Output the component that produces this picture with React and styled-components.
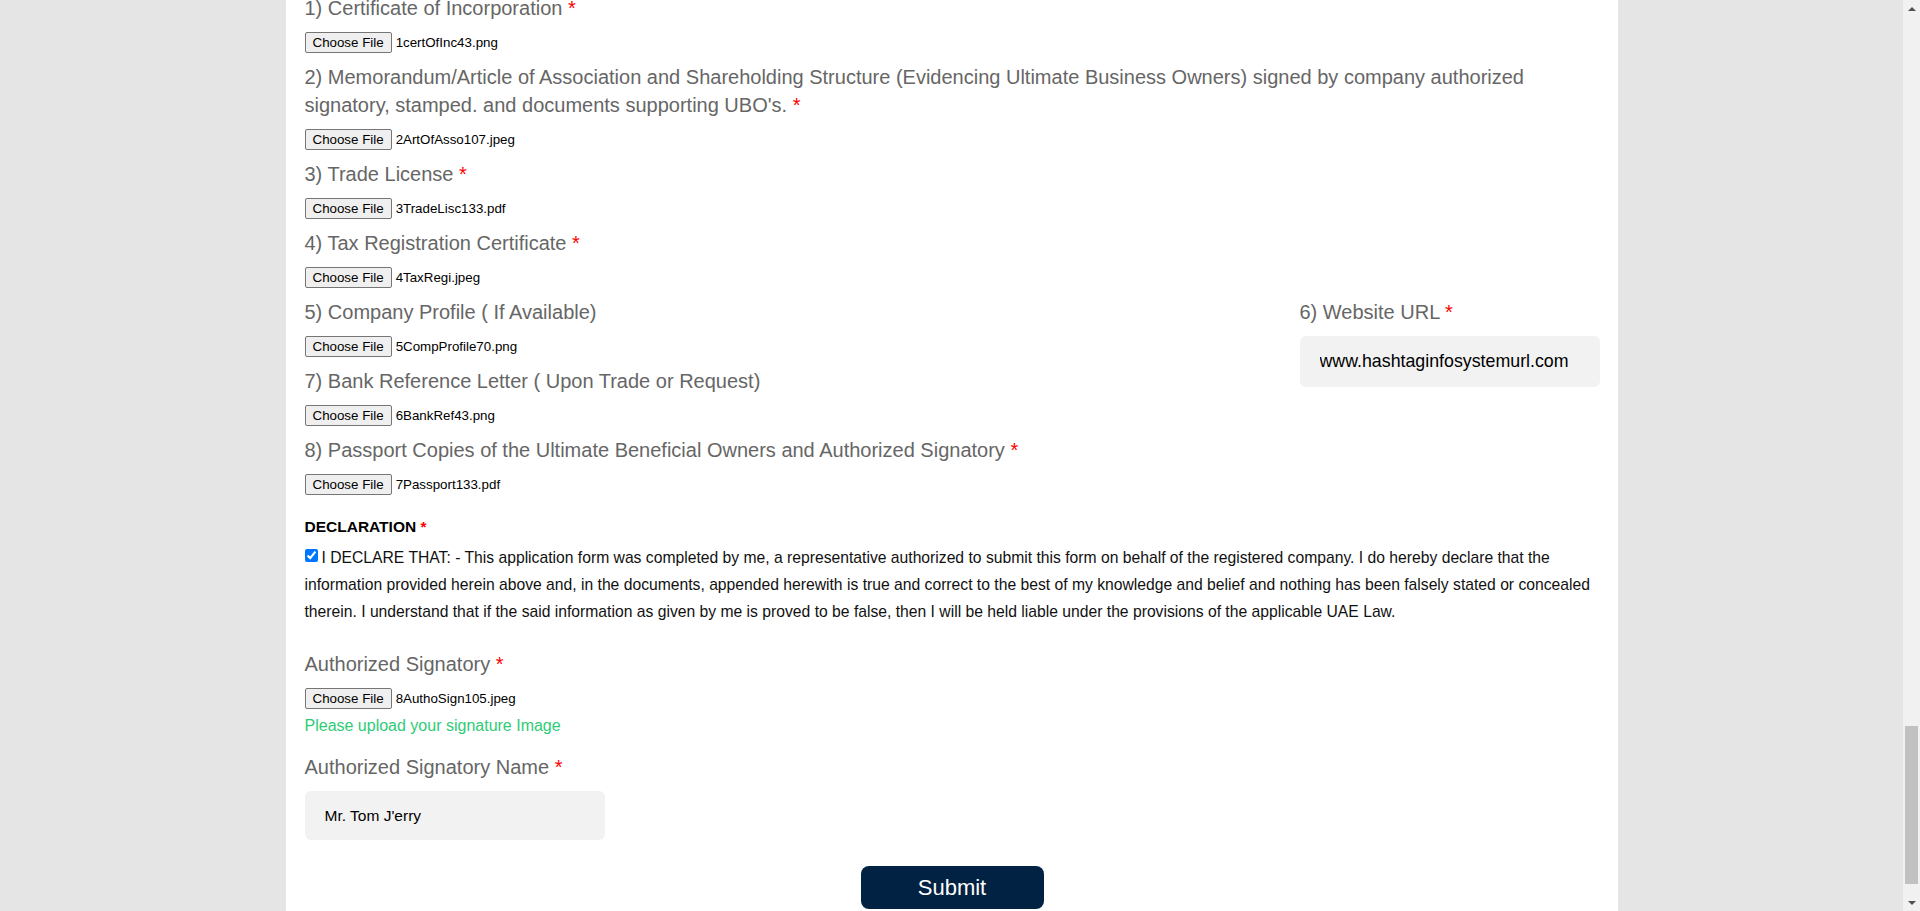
import React from 'react'
import styled, { createGlobalStyle } from 'styled-components'

const GlobalStyle = createGlobalStyle`
    html, body {
        margin: 0;
        padding: 0;
        overflow: hidden;
        background-color: #e5e5e5;
    }
`

const documents = [
    { no: 1, title: 'Certificate of Incorporation', file: '1certOfInc43.png', required: true },
    {
        no: 2,
        title: "Memorandum/Article of Association and Shareholding Structure (Evidencing Ultimate Business Owners) signed by company authorized signatory, stamped. and documents supporting UBO's.",
        file: '2ArtOfAsso107.jpeg',
        required: true,
    },
    { no: 3, title: 'Trade License', file: '3TradeLisc133.pdf', required: true },
    { no: 4, title: 'Tax Registration Certificate', file: '4TaxRegi.jpeg', required: true },
]

const Required = () => <Star> *</Star>

const FileField = ({ label, file, required }) => {
    return (
        <FileGroup>
            <Label>
                {label}
                {required && <Required />}
            </Label>
            <FileRow>
                <FileButton type='button'>Choose File</FileButton>
                <FileName>{file}</FileName>
            </FileRow>
        </FileGroup>
    )
}

const App = () => {
    return (
        <>
        <GlobalStyle />
        <Shell>
            <Page>
                <Panel>
                    <Form onSubmit={(e) => e.preventDefault()}>
                        {documents.map((d) => (
                            <FileField
                                key={d.no}
                                label={`${d.no}) ${d.title}`}
                                file={d.file}
                                required={d.required}
                            />
                        ))}

                        <SplitRow>
                            <div>
                                <FileField label='5) Company Profile ( If Available)' file='5CompProfile70.png' />
                                <FileField label='7) Bank Reference Letter ( Upon Trade or Request)' file='6BankRef43.png' />
                            </div>
                            <div>
                                <Label>
                                    6) Website URL<Required />
                                </Label>
                                <TextInput readOnly value='www.hashtaginfosystemurl.com' size='wide' />
                            </div>
                        </SplitRow>

                        <FileField
                            label='8) Passport Copies of the Ultimate Beneficial Owners and Authorized Signatory'
                            file='7Passport133.pdf'
                            required
                        />

                        <Declaration>
                            <DeclarationTitle>
                                DECLARATION<Required />
                            </DeclarationTitle>
                            <DeclarationText>
                                <Check type='checkbox' checked readOnly />
                                I DECLARE THAT: - This application form was completed by me, a representative authorized to submit this form on behalf of the registered company. I do hereby declare that the information provided herein above and, in the documents, appended herewith is true and correct to the best of my knowledge and belief and nothing has been falsely stated or concealed therein. I understand that if the said information as given by me is proved to be false, then I will be held liable under the provisions of the applicable UAE Law.
                            </DeclarationText>
                        </Declaration>

                        <SignatureBlock>
                            <Label>
                                Authorized Signatory<Required />
                            </Label>
                            <FileRow>
                                <FileButton type='button'>Choose File</FileButton>
                                <FileName>8AuthoSign105.jpeg</FileName>
                            </FileRow>
                            <Hint>Please upload your signature Image</Hint>

                            <NameLabel>
                                Authorized Signatory Name<Required />
                            </NameLabel>
                            <TextInput readOnly value="Mr. Tom J'erry" />
                        </SignatureBlock>

                        <Submit type='submit'>Submit</Submit>
                    </Form>
                </Panel>
            </Page>

            <Scrollbar>
                <Arrow dir='up' />
                <Track>
                    <Thumb />
                </Track>
                <Arrow dir='down' />
            </Scrollbar>
        </Shell>
        </>
    )
}

const Shell = styled.div`
    display: flex;
    flex-flow: row nowrap;
    width: 100vw;
    height: 911px;
    overflow: hidden;
`

const Page = styled.div`
    flex: 1;
    display: flex;
    justify-content: center;
    overflow: hidden;
    background-color: #e5e5e5;
`

const Panel = styled.main`
    width: 1332px;
    box-sizing: border-box;
    padding: 0 18px 0 19px;
    background-color: #fff;
    font-family: "Liberation Sans", Arial, sans-serif;
`

const Form = styled.form`
    margin-top: -6px;
`

const Star = styled.span`
    color: #ff0000;
`

const Label = styled.label`
    display: block;
    font-size: 20px;
    line-height: 28px;
    color: #666;
    margin-bottom: 10px;
`

const FileGroup = styled.div`
    margin-bottom: 10px;
`

const FileRow = styled.div`
    display: flex;
    align-items: center;
    height: 21px;
`

const FileButton = styled.button`
    height: 21px;
    box-sizing: border-box;
    margin: 0 4px 0 0;
    padding: 1px 7px;
    border: 1px solid #767676;
    border-radius: 2px;
    background-color: #efefef;
    color: #000;
    font-family: "Liberation Sans", Arial, sans-serif;
    font-size: 13.33px;
    line-height: 15px;
`

const FileName = styled.span`
    font-size: 13.33px;
    color: #000;
`

const SplitRow = styled.div`
    display: grid;
    grid-template-columns: 1fr 300px;
`

const TextInput = styled.input`
    display: block;
    width: 300px;
    height: ${(p) => (p.size === 'wide' ? '51px' : '49px')};
    box-sizing: border-box;
    padding: 0 20px;
    border: none;
    border-radius: 6px;
    background-color: #f2f2f2;
    color: #000;
    font-family: "Liberation Sans", Arial, sans-serif;
    font-size: ${(p) => (p.size === 'wide' ? '17.8px' : '15.5px')};
    outline: none;
`

const Declaration = styled.section`
    margin-top: 20px;
`

const DeclarationTitle = styled.h4`
    margin: 0;
    font-size: 15.5px;
    line-height: 24px;
    font-weight: 700;
    color: #000;
`

const DeclarationText = styled.p`
    margin: 5px 0 0;
    font-size: 15.7px;
    line-height: 27px;
    color: #111;
`

const Check = styled.input`
    width: 13px;
    height: 13px;
    margin: 0 4px 0 0;
    vertical-align: 1px;
`

const SignatureBlock = styled.section`
    margin-top: 25px;
`

const Hint = styled.div`
    margin-top: 6px;
    font-size: 16px;
    line-height: 22px;
    color: #2fcb77;
`

const NameLabel = styled(Label)`
    margin-top: 16px;
`

const Submit = styled.button`
    display: block;
    width: 183px;
    height: 43px;
    margin: 26px auto 0;
    border: none;
    border-radius: 8px;
    background-color: #012242;
    color: #fff;
    font-family: "Liberation Sans", Arial, sans-serif;
    font-size: 22px;
    cursor: pointer;
`

const Scrollbar = styled.div`
    width: 17px;
    display: flex;
    flex-flow: column nowrap;
    background-color: #f1f1f1;
`

const Arrow = styled.div`
    height: 17px;
    display: flex;
    justify-content: center;
    align-items: center;

    &::before {
        content: '';
        width: 0;
        height: 0;
        border-left: 4px solid transparent;
        border-right: 4px solid transparent;
        ${(p) => (p.dir === 'up' ? 'border-bottom: 4px solid #505050;' : 'border-top: 4px solid #505050;')}
    }
`

const Track = styled.div`
    flex: 1;
    display: flex;
    flex-flow: column nowrap;
    justify-content: flex-end;
    align-items: center;
    padding-bottom: 10px;
`

const Thumb = styled.div`
    width: 13px;
    height: 158px;
    background-color: #c1c1c1;
`

export default App
